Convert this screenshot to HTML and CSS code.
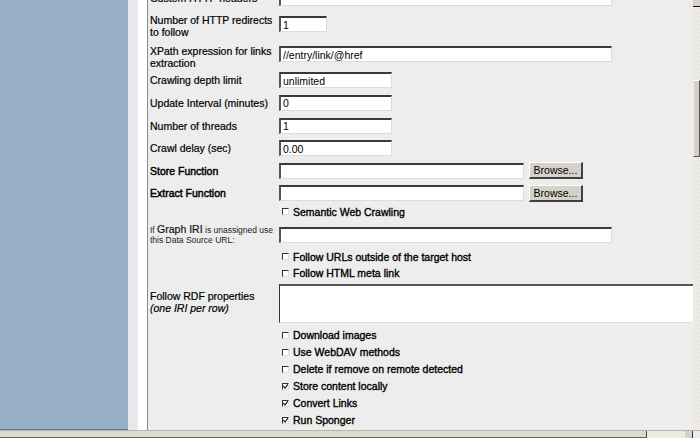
FILE: index.html
```html
<!DOCTYPE html>
<html>
<head>
<meta charset="utf-8">
<link rel="stylesheet" href="styles.css">
</head>
<body>
<div class="window">
  <div class="main">
    <aside class="sidebar"></aside>
    <div class="gutter"></div>
    <div class="gutter2"></div>
    <div class="content">
      <div class="form">
        <div class="lbl c">Custom HTTP headers</div>
        <div class="fld c"><input class="in w-long" type="text"></div>

        <div class="lbl c">Number of HTTP redirects<br>to follow</div>
        <div class="fld s6"><input class="in w-xs" type="text" value="1"></div>

        <div class="lbl e">XPath expression for links<br>extraction</div>
        <div class="fld s4"><input class="in w-long" type="text" value="//entry/link/@href"></div>

        <div class="lbl c">Crawling depth limit</div>
        <div class="fld c"><input class="in w-md" type="text" value="unlimited"></div>

        <div class="lbl c">Update Interval (minutes)</div>
        <div class="fld c"><input class="in w-md" type="text" value="0"></div>

        <div class="lbl c">Number of threads</div>
        <div class="fld c"><input class="in w-md" type="text" value="1"></div>

        <div class="lbl c">Crawl delay (sec)</div>
        <div class="fld c"><input class="in w-md" type="text" value="0.00"></div>

        <div class="lbl c b">Store Function</div>
        <div class="fld c row"><input class="in w-fn" type="text"><button class="btn">Browse...</button></div>

        <div class="lbl c b">Extract Function</div>
        <div class="fld c row"><input class="in w-fn" type="text"><button class="btn">Browse...</button></div>

        <div class="lbl"></div>
        <div class="fld c cbrow"><span class="cb"></span><span class="cbl">Semantic Web Crawling</span></div>

        <div class="lbl c small">If <span class="big">Graph IRI</span> is unassigned use<br>this Data Source URL:</div>
        <div class="fld c"><input class="in w-long" type="text"></div>

        <div class="lbl"></div>
        <div class="fld c cbrow"><span class="cb"></span><span class="cbl">Follow URLs outside of the target host</span></div>

        <div class="lbl"></div>
        <div class="fld c cbrow"><span class="cb"></span><span class="cbl">Follow HTML meta link</span></div>

        <div class="lbl s9">Follow RDF properties<br><i>(one IRI per row)</i></div>
        <div class="fld s2"><textarea class="ta"></textarea></div>

        <div class="lbl"></div>
        <div class="fld c cbrow"><span class="cb"></span><span class="cbl">Download images</span></div>

        <div class="lbl"></div>
        <div class="fld c cbrow"><span class="cb"></span><span class="cbl">Use WebDAV methods</span></div>

        <div class="lbl"></div>
        <div class="fld c cbrow"><span class="cb"></span><span class="cbl">Delete if remove on remote detected</span></div>

        <div class="lbl"></div>
        <div class="fld c cbrow"><span class="cb on"><svg width="5" height="5" viewBox="0 0 5 5"><path d="M0 2 L2 4 L5 0" fill="none" stroke="#222" stroke-width="1.2"/></svg></span><span class="cbl">Store content locally</span></div>

        <div class="lbl"></div>
        <div class="fld c cbrow"><span class="cb on"><svg width="5" height="5" viewBox="0 0 5 5"><path d="M0 2 L2 4 L5 0" fill="none" stroke="#222" stroke-width="1.2"/></svg></span><span class="cbl">Convert Links</span></div>

        <div class="lbl"></div>
        <div class="fld c cbrow"><span class="cb on"><svg width="5" height="5" viewBox="0 0 5 5"><path d="M0 2 L2 4 L5 0" fill="none" stroke="#222" stroke-width="1.2"/></svg></span><span class="cbl">Run Sponger</span></div>
      </div>
    </div>
    <div class="vscroll">
      <div class="varrow"></div>
      <div class="vtrack1"></div>
      <div class="vthumb"></div>
      <div class="vtrack2"></div>
    </div>
  </div>
  <div class="hscroll">
    <div class="hthumb"></div>
    <div class="htrack"></div>
    <div class="harrow"></div>
    <div class="corner"></div>
  </div>
</div>
</body>
</html>
```

FILE: styles.css
```css
html, body {
  margin: 0;
  padding: 0;
  width: 700px;
  height: 438px;
  overflow: hidden;
  background: #ececec;
}
.window {
  display: flex;
  flex-direction: column;
  width: 700px;
  height: 438px;
  font-family: "Liberation Sans", Arial, sans-serif;
  font-size: 10.5px;
  color: #000;
}
.main {
  display: flex;
  height: 431px;
}
.sidebar {
  width: 128px;
  background: #98b0c6;
  border-bottom: 1px solid #5d7891;
  box-sizing: border-box;
}
.gutter {
  width: 10px;
  background: #e7e7ed;
}
.gutter2 {
  width: 9px;
  background: #fff;
  border-right: 1px solid #8c8c8c;
}
.content {
  width: 545px;
  background: #ededed;
  overflow: hidden;
}
.form {
  display: grid;
  grid-template-columns: 129px 416px;
  grid-template-rows: 24px 32px 27px 22px 23px 23px 22px 23px 22px 16px 29px 16px 17px 45px 17px 17px 17px 17px 17px 17px;
  margin-top: -14px;
  padding-left: 2px;
}
.lbl {
  line-height: 12px;
  white-space: nowrap;
  -webkit-text-stroke: 0.2px #000;
}
.c { align-self: center; }
.e { align-self: end; padding-bottom: 0; }
.s6 { align-self: start; padding-top: 6px; }
.s4 { align-self: start; padding-top: 4px; }
.s2 { align-self: start; padding-top: 2px; }
.s9 { align-self: start; padding-top: 8px; }
.b { -webkit-text-stroke: 0.45px #000; }
.small { font-size: 8.5px; line-height: 10px; color: #222; -webkit-text-stroke: 0; }
.small .big { font-size: 10.5px; -webkit-text-stroke: 0.2px #000; }
.fld { display: flex; align-items: center; }
.row { gap: 5px; }
.in {
  box-sizing: border-box;
  height: 16px;
  margin: 0;
  padding: 0 2px;
  font-family: "Liberation Sans", Arial, sans-serif;
  font-size: 10.5px;
  color: #000;
  background: #fff;
  border-style: solid;
  border-width: 2px 1px 1px 2px;
  border-color: #3a3a3a #dcdcdc #dcdcdc #555;
  outline: none;
}
.w-long { width: 333px; }
.w-xs { width: 48px; }
.w-md { width: 113px; }
.w-fn { width: 245px; }
.btn {
  box-sizing: border-box;
  width: 54px;
  height: 17px;
  margin: 0;
  padding: 0;
  font-family: "Liberation Sans", Arial, sans-serif;
  font-size: 10.5px;
  color: #000;
  background: #d6d2ca;
  border-style: solid;
  border-width: 1px 2px 2px 1px;
  border-color: #fff #404040 #404040 #fff;
}
.cbrow { padding-left: 3px; gap: 4px; margin-top: -1px; }
.cb {
  box-sizing: border-box;
  width: 7px;
  height: 7px;
  background: #fff;
  border-style: solid;
  border-width: 1px;
  border-color: #333 #e0e0e0 #e0e0e0 #333;
  display: flex;
  align-items: center;
  justify-content: center;
}
.cbl { white-space: nowrap; -webkit-text-stroke: 0.35px #000; }
.ta {
  box-sizing: border-box;
  width: 414px;
  height: 39px;
  margin: 0;
  padding: 0;
  background: #fff;
  border-style: solid;
  border-width: 2px 0 1px 1px;
  border-color: #555 #ddd #ddd #333;
  resize: none;
  outline: none;
}
.vscroll {
  width: 7px;
  display: flex;
  flex-direction: column;
}
.varrow {
  height: 6px;
  background: #d6d2ca;
  border-bottom: 1px solid #111;
}
.vtrack1, .vtrack2, .htrack {
  background: repeating-conic-gradient(#e2dfd6 0 25%, #f6f5f1 0 50%) 0 0 / 2px 2px;
}
.vtrack1 { height: 73px; }
.vthumb {
  height: 77px;
  box-sizing: border-box;
  background: #d4d0c6;
  border-style: solid;
  border-width: 1px 1px 1px 1px;
  border-color: #fff #555 #555 #eee;
}
.vtrack2 { flex: 1; }
.hscroll {
  display: flex;
  height: 7px;
  border-top: 1px solid #b8b4aa;
}
.hthumb {
  width: 647px;
  box-sizing: border-box;
  background: #dedad0;
  border-right: 1px solid #444;
  border-bottom: 1px solid #666;
}
.htrack { width: 38px; }
.harrow {
  width: 8px;
  background: #d6d2ca;
  border-right: 1px solid #333;
  box-sizing: border-box;
}
.corner {
  flex: 1;
  background: #ececec;
}
```
